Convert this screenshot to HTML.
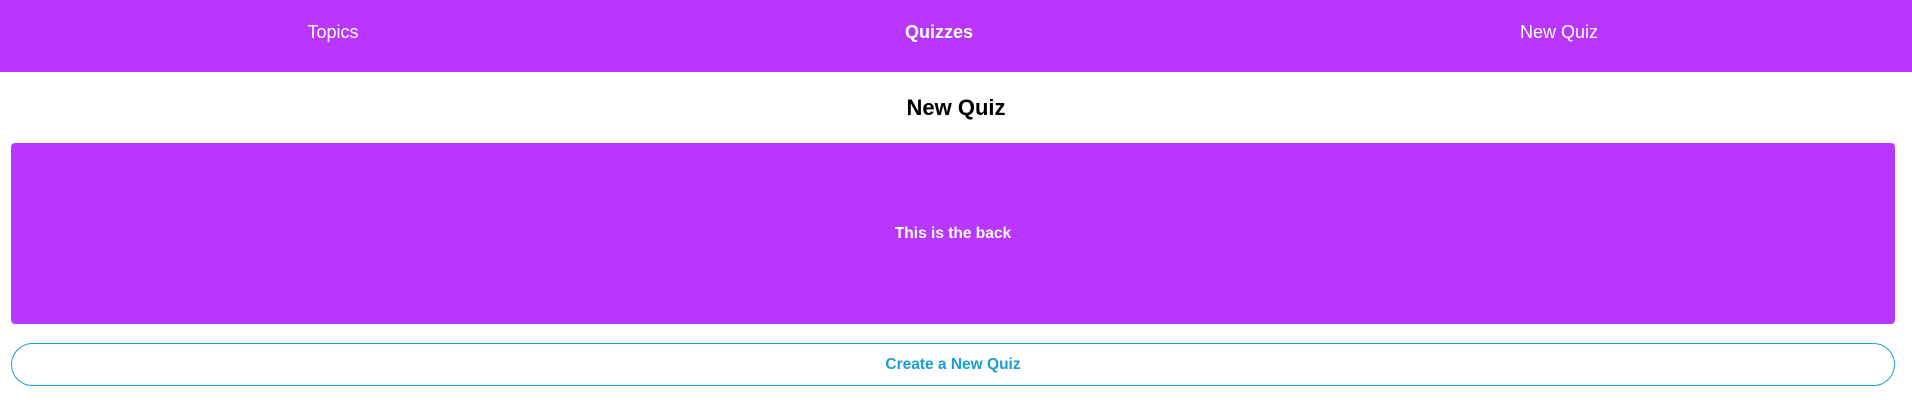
<!DOCTYPE html>
<html><head><style>
body{margin:0;width:1912px;height:406px;background:#fff;font-family:"Liberation Sans",Arial,sans-serif;overflow:hidden;position:relative}
.nav{position:absolute;left:0;top:0;width:1912px;height:72px;background:#b836fe}
.nav span{position:absolute;top:22px;font-size:18px;color:#fff;transform:translateX(-50%);white-space:nowrap}
h1{position:absolute;top:95px;left:0;width:1912px;text-align:center;margin:0;font-size:22px;font-weight:bold;color:#000}
.card{position:absolute;left:11px;top:143px;width:1884px;height:181px;background:#b836fe;border-radius:4px;color:#fff;font-weight:bold;font-size:15.5px;display:flex;align-items:center;justify-content:center}
.btn{position:absolute;left:11px;top:343px;width:1882px;height:41px;border:1px solid #1a9fd0;border-radius:22px;color:#1a9fd0;font-weight:bold;font-size:15.5px;display:flex;align-items:center;justify-content:center}
</style></head><body>
<div class="nav"><span style="left:333px">Topics</span><span style="left:939px;font-weight:bold">Quizzes</span><span style="left:1559px">New Quiz</span></div>
<h1>New Quiz</h1>
<div class="card">This is the back</div>
<div class="btn">Create a New Quiz</div>
</body></html>
